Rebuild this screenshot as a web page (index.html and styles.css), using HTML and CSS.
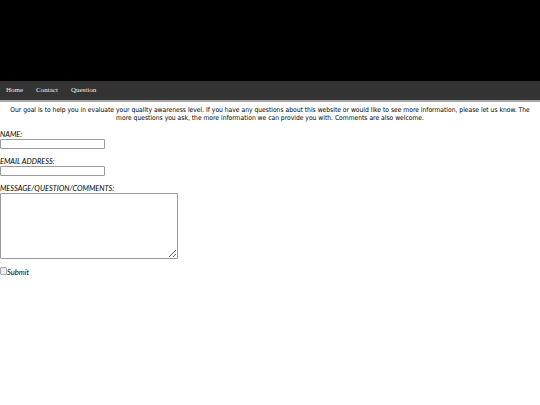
FILE: index.html
```html
<!DOCTYPE html>
<html>
<head>
<meta charset="utf-8">
<link rel="stylesheet" href="styles.css">
</head>
<body>
<div class="banner"></div>
<nav class="nav">
  <a href="#">Home</a>
  <a href="#">Contact</a>
  <a href="#">Question</a>
</nav>
<p class="intro">Our goal is to help you in evaluate your quality awareness level. If you have any questions about this website or would like to see more information, please let us know. The more questions you ask, the more information we can provide you with. Comments are also welcome.</p>
<form class="form">
  <label class="lbl">NAME:</label>
  <input class="field" type="text">
  <label class="lbl">EMAIL ADDRESS:</label>
  <input class="field" type="text">
  <label class="lbl">MESSAGE/QUESTION/COMMENTS:</label>
  <textarea class="msg"></textarea>
  <div class="submit-row"><span class="box"></span><span class="submit">Submit</span></div>
</form>
</body>
</html>
```
FILE: styles.css
```css
html, body { margin: 0; padding: 0; background: #fff; }
.banner { height: 81px; background: #000; }
.nav {
  height: 19px;
  background: #333;
  border-bottom: 2px solid #a8a8a8;
  display: flex;
  align-items: center;
  padding-left: 6px;
  gap: 13px;
}
.nav a, .nav a:visited {
  color: #f0f0f0;
  text-decoration: none;
  font-family: "Liberation Serif", serif;
  font-size: 7px;
  line-height: 9px;
}
.intro {
  margin: 4px 6px 0;
  text-align: center;
  font-family: "DejaVu Sans Condensed", "DejaVu Sans", sans-serif;
  font-stretch: condensed;
  font-size: 6.7px;
  line-height: 8px;
  color: #000;
}
.form {
  display: flex;
  flex-direction: column;
  align-items: flex-start;
  margin-top: 8px;
}
.lbl {
  font-family: "Lato", sans-serif;
  font-style: italic;
  font-size: 7.4px;
  line-height: 9px;
  color: #000;
  margin-top: 8px;
}
.lbl:first-child { margin-top: 0; }
.field {
  box-sizing: border-box;
  width: 105px;
  height: 10px;
  margin: 0;
  padding: 0;
  border: 1px solid #999;
  border-radius: 1px;
}
.msg {
  box-sizing: border-box;
  width: 178px;
  height: 66px;
  margin: 0;
  padding: 0;
  border: 1px solid #999;
  border-radius: 1px;
  resize: vertical;
}
.submit-row { display: flex; align-items: flex-start; margin-top: 8px; }
.box {
  box-sizing: border-box;
  width: 7px;
  height: 8px;
  border: 1px solid #aaa;
  background: #eee;
  border-radius: 1px;
}
.submit {
  font-family: "Lato", sans-serif;
  font-style: italic;
  font-size: 7.6px;
  line-height: 9px;
  margin-top: 1px;
  color: #000;
}
```
